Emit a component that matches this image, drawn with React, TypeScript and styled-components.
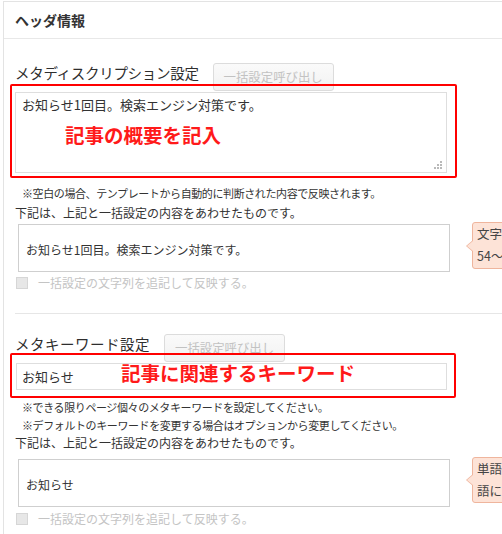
import React from "react";
import styled, { createGlobalStyle } from "styled-components";

const Global = createGlobalStyle`
  html, body { margin: 0; padding: 0; overflow: hidden; background: #fff; }
  body {
    font-family: "Noto Sans CJK JP", "Noto Sans", sans-serif;
    color: #333;
  }
`;

const Card = styled.div`
  margin: 1px 0 0 3px;
  width: 640px;
  border: 1px solid #e3e3e3;
  background: #fff;
`;

const CardHeader = styled.div`
  height: 36px;
  padding-left: 11px;
  display: flex;
  align-items: center;
  font-size: 14px;
  font-weight: 700;
  color: #333;
  border-bottom: 1px solid #e8e8e8;
`;

const Section = styled.section<{ $top: number; $bottom: number }>`
  padding: ${(p) => p.$top}px 0 ${(p) => p.$bottom}px 11px;
  display: flex;
  flex-direction: column;
  align-items: flex-start;
`;

const Divider = styled.hr`
  margin: 0 0 0 11px;
  border: 0;
  border-top: 1px solid #e6e6e6;
`;

const TitleRow = styled.div`
  display: flex;
  align-items: flex-start;
  gap: 14px;
`;

const Title = styled.h3<{ $tracking: number }>`
  margin: 0;
  font-size: 14.5px;
  font-weight: 400;
  line-height: 20px;
  letter-spacing: ${(p) => p.$tracking}px;
  color: #2e2e2e;
  white-space: nowrap;
`;

const LoadButton = styled.button`
  height: 28px;
  padding: 0 10px;
  border: 1px solid #dcdcdc;
  border-radius: 3px;
  background: linear-gradient(#fafafa, #f2f2f2);
  color: #c2c2c2;
  font-family: inherit;
  font-size: 12.4px;
  white-space: nowrap;
  cursor: default;
`;

const FieldWrap = styled.div`
  position: relative;
  margin-top: 1px;
`;

const TextArea = styled.textarea`
  display: block;
  box-sizing: border-box;
  width: 432px;
  height: 81px;
  margin: 0;
  padding: 3px 6px;
  border: 1px solid #dedede;
  resize: none;
  font-family: inherit;
  font-size: 13px;
  line-height: 18px;
  color: #333;
  background: #fff;
  outline: none;
`;

const TextInput = styled.input`
  display: block;
  box-sizing: border-box;
  width: 431px;
  height: 27px;
  margin: 0 0 0 1px;
  padding: 0 5px;
  border: 1px solid #dedede;
  font-family: inherit;
  font-size: 13px;
  color: #333;
  background: #fff;
  outline: none;
`;

const Grip = styled.svg`
  position: absolute;
  right: 4px;
  bottom: 3px;
  width: 9px;
  height: 9px;
`;

const Annotation = styled.div<{ $t: number; $r: number; $b: number; $l: number }>`
  position: absolute;
  top: ${(p) => p.$t}px;
  right: ${(p) => p.$r}px;
  bottom: ${(p) => p.$b}px;
  left: ${(p) => p.$l}px;
  border: 2px solid #ff0000;
  border-radius: 2px;
  pointer-events: none;
`;

const AnnotationLabel = styled.span<{ $x: number; $y: number }>`
  position: absolute;
  left: ${(p) => p.$x}px;
  top: ${(p) => p.$y}px;
  font-size: 19.5px;
  line-height: 24px;
  font-weight: 700;
  color: #ff1a1a;
  white-space: nowrap;
`;

const Note = styled.p<{ $mt: number }>`
  margin: ${(p) => p.$mt}px 0 0 7px;
  font-size: 11px;
  line-height: 18px;
  letter-spacing: -0.4px;
  color: #333;
  white-space: nowrap;
`;

const Desc = styled.p<{ $mt: number }>`
  margin: ${(p) => p.$mt}px 0 0 0;
  font-size: 12px;
  line-height: 18px;
  color: #333;
  white-space: nowrap;
`;

const PreviewRow = styled.div<{ $mt: number }>`
  display: flex;
  align-items: flex-start;
  gap: 22px;
  margin: ${(p) => p.$mt}px 0 0 3px;
`;

const Preview = styled.div`
  box-sizing: border-box;
  width: 432px;
  height: 48px;
  padding: 2px 7px 0;
  border: 1px solid #cfcfcf;
  display: flex;
  align-items: center;
  font-size: 12px;
  color: #333;
  white-space: nowrap;
`;

const Tip = styled.div<{ $h: number }>`
  position: relative;
  box-sizing: border-box;
  margin-top: -2px;
  width: 140px;
  height: ${(p) => p.$h}px;
  padding: 0 4px;
  border: 1px solid #efb59d;
  border-radius: 3px;
  background: #fde3d7;
  font-size: 12.5px;
  line-height: 22px;
  color: #444;
  white-space: nowrap;

  &::before,
  &::after {
    content: "";
    position: absolute;
    top: 50%;
    width: 0;
    height: 0;
    border-style: solid;
    transform: translateY(-50%);
  }
  &::before {
    left: -7px;
    border-width: 6px 7px 6px 0;
    border-color: transparent #efb59d transparent transparent;
  }
  &::after {
    left: -6px;
    border-width: 5px 6px 5px 0;
    border-color: transparent #fde3d7 transparent transparent;
  }
`;

const CheckRow = styled.label<{ $mt: number }>`
  display: flex;
  align-items: center;
  gap: 10px;
  margin: ${(p) => p.$mt}px 0 0 1px;
  font-size: 12px;
  line-height: 16px;
  color: #c4c4c4;
  white-space: nowrap;
`;

const CheckBox = styled.span`
  box-sizing: border-box;
  width: 12px;
  height: 12px;
  border: 1px solid #d6d6d6;
  background: #e7e7e7;
`;

const GripIcon = () => (
  <Grip viewBox="0 0 9 9">
    {[
      [6, 0],
      [3, 3],
      [6, 3],
      [0, 6],
      [3, 6],
      [6, 6],
    ].map(([x, y]) => (
      <rect key={`${x}-${y}`} x={x} y={y} width="2" height="2" fill="#b9b9b9" />
    ))}
  </Grip>
);

export default function App() {
  return (
    <>
      <Global />
      <Card>
        <CardHeader>ヘッダ情報</CardHeader>

        <Section $top={24} $bottom={22}>
          <TitleRow>
            <Title $tracking={-0.3}>メタディスクリプション設定</Title>
            <LoadButton type="button">一括設定呼び出し</LoadButton>
          </TitleRow>
          <FieldWrap>
            <TextArea readOnly defaultValue="お知らせ1回目。検索エンジン対策です。" />
            <GripIcon />
            <Annotation $t={-8} $r={-10} $b={-5} $l={-5}>
              <AnnotationLabel $x={53} $y={37}>記事の概要を記入</AnnotationLabel>
            </Annotation>
          </FieldWrap>
          <Note $mt={11}>※空白の場合、テンプレートから自動的に判断された内容で反映されます。</Note>
          <Desc $mt={2}>下記は、上記と一括設定の内容をあわせたものです。</Desc>
          <PreviewRow $mt={2}>
            <Preview>お知らせ1回目。検索エンジン対策です。</Preview>
            <Tip $h={47}>
              文字
              <br />
              54〜
            </Tip>
          </PreviewRow>
          <CheckRow $mt={3}>
            <CheckBox />
            一括設定の文字列を追記して反映する。
          </CheckRow>
        </Section>

        <Divider />

        <Section $top={20} $bottom={30}>
          <TitleRow>
            <Title $tracking={0.5}>メタキーワード設定</Title>
            <LoadButton type="button">一括設定呼び出し</LoadButton>
          </TitleRow>
          <FieldWrap>
            <TextInput readOnly defaultValue="お知らせ" />
            <Annotation $t={-10} $r={-9} $b={-8} $l={-5}>
              <AnnotationLabel $x={109} $y={6}>記事に関連するキーワード</AnnotationLabel>
            </Annotation>
          </FieldWrap>
          <Note $mt={8}>※できる限りページ個々のメタキーワードを設定してください。</Note>
          <Note $mt={0}>※デフォルトのキーワードを変更する場合はオプションから変更してください。</Note>
          <Desc $mt={0}>下記は、上記と一括設定の内容をあわせたものです。</Desc>
          <PreviewRow $mt={7}>
            <Preview>お知らせ</Preview>
            <Tip $h={46}>
              単語
              <br />
              語に
            </Tip>
          </PreviewRow>
          <CheckRow $mt={4}>
            <CheckBox />
            一括設定の文字列を追記して反映する。
          </CheckRow>
        </Section>
      </Card>
    </>
  );
}
